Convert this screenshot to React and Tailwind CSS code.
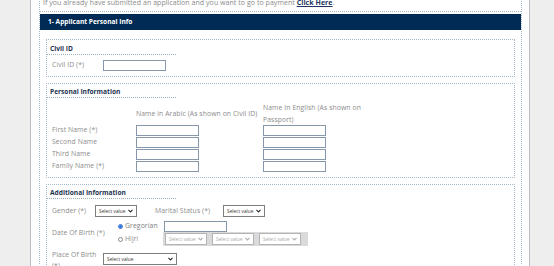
import React from "react";

const font = { fontFamily: '"Open Sans", "Liberation Sans", sans-serif' };

function Chevron({ color = "#333" }) {
  return (
    <svg width="5" height="4" viewBox="0 0 5 4" className="shrink-0">
      <polyline points="0.5,0.8 2.5,3 4.5,0.8" fill="none" stroke={color} strokeWidth="1.1" />
    </svg>
  );
}

function Select({ w = "w-[42px]", disabled = false }) {
  return (
    <div
      className={`${w} h-[12px] shrink-0 flex items-center justify-between pl-[3px] pr-[3px] bg-white border ${
        disabled ? "border-[#b4b4b4] text-[#a8a8a8]" : "border-[#7d7d7d] text-[#333]"
      } text-[4.8px] leading-none tracking-normal`}
    >
      <span>Select value</span>
      <Chevron color={disabled ? "#aaa" : "#222"} />
    </div>
  );
}

function Input({ w = "w-[63px]" }) {
  return <div className={`${w} h-[11px] shrink-0 bg-white border border-[#8797aa]`} />;
}

function Legend({ children, pt = "pt-[3px]" }) {
  return (
    <div
      className={`w-[129px] ${pt} pl-[3px] leading-[10px] text-[6.6px] font-bold text-[#1d3452] border-b border-dotted border-[#9fb0c4]`}
    >
      {children}
    </div>
  );
}

export default function App() {
  return (
    <div className="w-[554px] h-[266px] overflow-hidden bg-[#eeeeee] flex" style={font}>
      <div className="w-[30px] shrink-0" />
      <div className="w-[500px] h-[266px] shrink-0 bg-white border-x border-[#b8bdc4] pl-[8px] pr-[7px]">
        <div className="border-x border-dotted border-[#a9b9cc] h-full -mt-[2px]">
          <div className="border-b border-dotted border-[#a9b9cc] pl-[3px] pb-[3px] leading-[10px] text-[7px] tracking-[0.05px] text-[#8a8a8a] whitespace-nowrap">
            If you already have submitted an application and you want to go to payment{" "}
            <span className="text-[#1d3560] font-bold underline">Click Here</span>.
          </div>
          <div className="mt-[2px] h-[16px] bg-[#012b55] flex items-center pl-[8px] text-white text-[6.6px] font-bold">
            1- Applicant Personal Info
          </div>
          <div className="pt-[9px] px-[6px] flex flex-col">
            {/* Civil ID */}
            <div className="border border-dotted border-[#a9b9cc] pb-[5px]">
              <Legend pt="pt-[4px]">Civil ID</Legend>
              <div className="mt-[5px] pl-[5px] flex items-center text-[6.8px] tracking-[0.1px] text-[#8c8c8c]">
                <div className="w-[51px] shrink-0 whitespace-nowrap">Civil ID (*)</div>
                <Input />
              </div>
            </div>

            {/* Personal Information */}
            <div className="mt-[6px] border border-dotted border-[#a9b9cc] pb-[5px]">
              <Legend>Personal Information</Legend>
              <div className="mt-[4px] pl-[5px] text-[6.8px] tracking-[0.1px] text-[#8c8c8c]">
                <div className="flex items-center h-[23px]">
                  <div className="w-[84px] shrink-0" />
                  <div className="w-[127px] shrink-0 whitespace-nowrap leading-[12px]">
                    Name in Arabic (As shown on Civil ID)
                  </div>
                  <div className="leading-[12px] whitespace-nowrap">
                    Name In English (As shown on
                    <br />
                    Passport)
                  </div>
                </div>
                <div className="flex flex-col gap-[1px]">
                  {["First Name (*)", "Second Name", "Third Name", "Family Name (*)"].map((l) => (
                    <div key={l} className="flex items-center h-[11px]">
                      <div className="w-[84px] shrink-0 whitespace-nowrap">{l}</div>
                      <div className="w-[127px] shrink-0">
                        <Input />
                      </div>
                      <Input />
                    </div>
                  ))}
                </div>
              </div>
            </div>

            {/* Additional Information */}
            <div className="mt-[6px] border border-dotted border-[#a9b9cc] pb-[5px]">
              <Legend>Additional Information</Legend>
              <div className="pl-[5px] text-[6.8px] tracking-[0.1px] text-[#8c8c8c]">
                <div className="mt-[6px] flex items-center h-[12px]">
                  <div className="w-[43px] shrink-0 whitespace-nowrap">Gender (*)</div>
                  <Select />
                  <div className="ml-[18px] w-[68px] shrink-0 whitespace-nowrap">Marital Status (*)</div>
                  <Select />
                </div>

                <div className="mt-[3px] flex items-center">
                  <div className="w-[66px] shrink-0 whitespace-nowrap">Date Of Birth (*)</div>
                  <div className="flex flex-col">
                    <div className="flex items-center h-[12px]">
                      <div className="w-[45px] shrink-0 flex items-center gap-[2px]">
                        <div className="w-[5px] h-[5px] rounded-full border border-[#2e6fd8] bg-white flex items-center justify-center">
                          <div className="w-[3px] h-[3px] rounded-full bg-[#2e6fd8]" />
                        </div>
                        <span className="text-[#7d7d7d]">Gregorian</span>
                      </div>
                      <div className="ml-[1px]">
                        <Input />
                      </div>
                    </div>
                    <div className="flex items-center h-[14px]">
                      <div className="w-[45px] shrink-0 flex items-center gap-[2px]">
                        <div className="w-[5px] h-[5px] rounded-full border border-[#8a8a8a] bg-white" />
                        <span className="text-[#8c8c8c]">Hijri</span>
                      </div>
                      <div className="h-[14px] bg-[#dadada] flex items-center gap-[5px] pl-[2px] pr-[7px]">
                        <Select disabled />
                        <Select disabled />
                        <Select disabled />
                      </div>
                    </div>
                  </div>
                </div>

                <div className="mt-[3px] flex items-start">
                  <div className="w-[51px] shrink-0 leading-[11px]">
                    Place Of Birth
                    <br />
                    (*)
                  </div>
                  <div className="mt-[4px]">
                    <Select w="w-[74px]" />
                  </div>
                </div>
              </div>
            </div>
          </div>
        </div>
      </div>
    </div>
  );
}
